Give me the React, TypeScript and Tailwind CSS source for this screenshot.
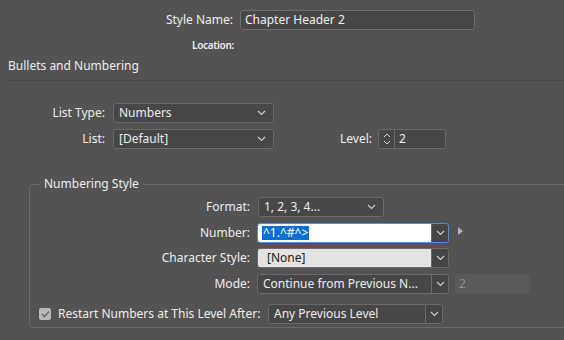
import React from "react";

function Chevron({ className = "" }: { className?: string }) {
  return (
    <svg width="9" height="6" viewBox="0 0 9 6" className={className}>
      <polyline points="1,1 4.5,4.5 8,1" fill="none" stroke="#d0d0d0" strokeWidth="1.1" />
    </svg>
  );
}

function Select({ value, width }: { value: string; width: string }) {
  return (
    <div className={`${width} h-5 flex items-center justify-between rounded-[3px] border border-[#6a6a6a] bg-[#474747] pl-[5px] pr-[7px] text-[#ececec]`}>
      <span className="truncate">{value}</span>
      <Chevron />
    </div>
  );
}

function Combo({
  value,
  width,
  tone = "dark",
}: {
  value: string;
  width: string;
  tone?: "dark" | "light" | "focus";
}) {
  const field =
    tone === "light"
      ? "bg-[#e3e3e3] text-[#222] pl-[9px]"
      : tone === "focus"
      ? "bg-white text-white pl-[4px]"
      : "bg-[#474747] text-[#ececec] pl-[5px]";
  const border = tone === "focus" ? "border-[#4a90d9]" : "border-[#6a6a6a]";
  return (
    <div className={`${width} h-5 flex rounded-[3px] border ${border} overflow-hidden`}>
      <div className={`flex-1 flex items-center ${field}`}>
        {tone === "focus" ? (
          <span className="bg-[#0a6fd6] leading-[14px] px-[1px]">{value}</span>
        ) : (
          <span className="truncate">{value}</span>
        )}
      </div>
      <div className="w-[17px] flex items-center justify-center border-l border-[#6a6a6a] bg-[#454545]">
        <Chevron />
      </div>
    </div>
  );
}

export default function App() {
  return (
    <div className="w-[564px] h-[340px] overflow-hidden bg-[#535353] text-[12px] text-[#ececec] font-['Noto_Sans',sans-serif] leading-4 whitespace-nowrap">
      <div className="pt-[10px]">
        <div className="flex items-center h-5">
          <div className="w-[233px] text-right">Style Name:</div>
          <div className="ml-[7px] w-[235px] h-5 flex items-center rounded-[3px] border border-[#6e6e6e] bg-[#474747] pl-[4px] text-[#f0f0f0]">
            Chapter Header 2
          </div>
        </div>
        <div className="mt-[9px] h-3 w-[234px] text-right text-[10px] leading-3 font-semibold tracking-[-0.3px]">Location:</div>

        <div className="mt-[4px] ml-2 h-[26px] pb-[3px] flex items-center border-b border-[#474747]">
          Bullets and Numbering
        </div>

        <div className="mt-[22px] flex items-center h-5">
          <div className="w-[105px] text-right">List Type:</div>
          <div className="ml-2">
            <Select value="Numbers" width="w-[161px]" />
          </div>
        </div>
        <div className="mt-[6px] flex items-center h-5">
          <div className="w-[105px] text-right">List:</div>
          <div className="ml-2">
            <Select value="[Default]" width="w-[161px]" />
          </div>
          <div className="w-[98px] text-right">Level:</div>
          <div className="ml-[6px] w-[68px] h-5 flex rounded-[3px] border border-[#6a6a6a] bg-[#474747]">
            <div className="w-4 flex flex-col items-center justify-center gap-[2px] border-r border-[#6a6a6a]">
              <svg width="8" height="5" viewBox="0 0 8 5">
                <polyline points="1,4 4,1 7,4" fill="none" stroke="#cfcfcf" strokeWidth="1" />
              </svg>
              <svg width="8" height="5" viewBox="0 0 8 5">
                <polyline points="1,1 4,4 7,1" fill="none" stroke="#cfcfcf" strokeWidth="1" />
              </svg>
            </div>
            <div className="flex items-center pl-[4px] text-[#f0f0f0]">2</div>
          </div>
        </div>

        <fieldset className="mt-[27px] ml-[29px] w-[560px] rounded-[3px] border border-[#6a6a6a] pt-[5px] pb-[3px]">
          <legend className="ml-[10px] px-[4px] leading-4">Numbering Style</legend>

          <div className="flex items-center h-5">
            <div className="w-[220px] text-right">Format:</div>
            <div className="ml-[8px]">
              <Select value="1, 2, 3, 4..." width="w-[126px]" />
            </div>
          </div>
          <div className="mt-[6px] flex items-center h-5">
            <div className="w-[220px] text-right">Number:</div>
            <div className="ml-[7px]">
              <Combo value="^1.^#^>" width="w-[192px]" tone="focus" />
            </div>
            <svg width="6" height="8" viewBox="0 0 6 8" className="ml-[9px] -mt-[5px]">
              <polygon points="0,0 5,4 0,8" fill="#b5b5b5" />
            </svg>
          </div>
          <div className="mt-[5px] flex items-center h-5">
            <div className="w-[220px] text-right">Character Style:</div>
            <div className="ml-[7px]">
              <Combo value="[None]" width="w-[192px]" tone="light" />
            </div>
          </div>
          <div className="mt-[6px] flex items-center h-5">
            <div className="w-[220px] text-right">Mode:</div>
            <div className="ml-[7px]">
              <Combo value="Continue from Previous N..." width="w-[192px]" />
            </div>
            <div className="ml-[6px] w-[75px] h-5 flex items-center rounded-[3px] bg-[#5a5a5a] pl-[4px] text-[#8f8f8f]">2</div>
          </div>
          <div className="mt-[10px] flex items-center h-5">
            <div className="ml-[9px] w-3 h-3 flex items-center justify-center rounded-[2px] bg-[#b8b8b8]">
              <svg width="9" height="8" viewBox="0 0 9 8">
                <polyline points="1,4 3.5,6.5 8,1.5" fill="none" stroke="#6b6b6b" strokeWidth="1.6" />
              </svg>
            </div>
            <div className="ml-[7px] w-[202px]">Restart Numbers at This Level After:</div>
            <div className="ml-[8px]">
              <Combo value="Any Previous Level" width="w-[175px]" />
            </div>
          </div>
        </fieldset>
      </div>
    </div>
  );
}
